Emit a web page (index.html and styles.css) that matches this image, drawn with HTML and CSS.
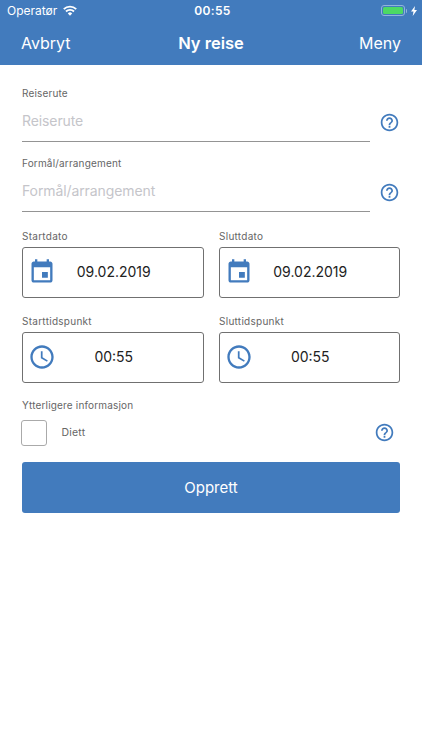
FILE: index.html
```
<!DOCTYPE html>
<html lang="nb">
<head>
<meta charset="utf-8">
<title>Ny reise</title>
<link rel="stylesheet" href="styles.css">
</head>
<body>
<svg class="defs" aria-hidden="true">
  <symbol id="help" viewBox="0 0 24 24"><path d="M11 18h2v-2h-2v2zm1-16C6.480 2 2 6.480 2 12s4.480 10 10 10 10-4.480 10-10S17.520 2 12 2zm0 18c-4.410 0-8-3.590-8-8s3.590-8 8-8 8 3.590 8 8-3.590 8-8 8zm0-14c-2.210 0-4 1.790-4 4h2c0-1.100.9-2 2-2s2 .9 2 2c0 2-3 1.750-3 5h2c0-2.250 3-2.500 3-5 0-2.210-1.790-4-4-4z"/></symbol>
  <symbol id="event" viewBox="0 0 24 24"><path d="M17 12h-5v5h5v-5zM16 1v2H8V1H6v2H5c-1.110 0-1.990.9-1.990 2L3 19c0 1.100.89 2 2 2h14c1.100 0 2-.9 2-2V5c0-1.100-.9-2-2-2h-1V1h-2zm3 18H5V8h14v11z"/></symbol>
  <symbol id="clock" viewBox="0 0 24 24"><path d="M11.990 2C6.470 2 2 6.480 2 12s4.470 10 9.990 10C17.520 22 22 17.520 22 12S17.520 2 11.990 2zM12 20c-4.420 0-8-3.580-8-8s3.580-8 8-8 8 3.580 8 8-3.580 8-8 8zm.5-13H11v6l5.250 3.150.75-1.230-4.500-2.670z"/></symbol>
</svg>
<header class="header">
  <div class="status">
    <div class="carrier"><span>Operatør</span>
      <svg class="wifi" viewBox="0 0 14 11"><g fill="none" stroke="#fff" stroke-width="1.900"><path d="M.8 4.100a8.900 8.900 0 0 1 12.400 0"/><path d="M3 6.500a5.700 5.700 0 0 1 8 0"/></g><path fill="#fff" d="M4.800 8.400a3.200 3.200 0 0 1 4.400 0L7 10.700z"/></svg>
    </div>
    <span class="time">00:55</span>
    <div class="power">
      <span class="battery"><span class="charge"></span></span><span class="cap"></span>
      <svg class="bolt" viewBox="0 0 6 10"><path fill="#fff" d="M4 0 0 5.600h2.500L1.700 10 6 4.100H3.400z"/></svg>
    </div>
  </div>
  <nav class="nav"><span>Avbryt</span><h1 class="title">Ny reise</h1><span class="menu">Meny</span></nav>
</header>
<main class="form">
  <div class="label">Reiserute</div>
  <div class="row"><div class="input">Reiserute</div><svg class="help"><use href="#help"/></svg></div>
  <div class="label second">Formål/arrangement</div>
  <div class="row"><div class="input">Formål/arrangement</div><svg class="help"><use href="#help"/></svg></div>
  <div class="pickers">
    <div><div class="label">Startdato</div><div class="box"><svg class="icon"><use href="#event"/></svg><span class="value">09.02.2019</span></div></div>
    <div><div class="label">Sluttdato</div><div class="box"><svg class="icon"><use href="#event"/></svg><span class="value">09.02.2019</span></div></div>
    <div><div class="label">Starttidspunkt</div><div class="box"><svg class="icon"><use href="#clock"/></svg><span class="value">00:55</span></div></div>
    <div><div class="label">Sluttidspunkt</div><div class="box"><svg class="icon"><use href="#clock"/></svg><span class="value">00:55</span></div></div>
  </div>
  <div class="label extra">Ytterligere informasjon</div>
  <div class="option"><span class="check"></span><span class="diet">Diett</span><svg class="help"><use href="#help"/></svg></div>
  <div class="submit">Opprett</div>
</main>
</body>
</html>
```
FILE: styles.css
```
* { box-sizing: border-box; }
body { margin: 0; background: #fff; font-family: Inter, "Liberation Sans", sans-serif; color: #222; }
.defs { display: none; }
svg { display: block; flex: none; }
.header { height: 65px; background: #427bbd; color: #fff; }
.status { height: 21px; display: grid; grid-template-columns: 1fr auto 1fr; align-items: center; padding: 0 5px 0 7px; font-size: 12px; }
.carrier { display: flex; align-items: center; gap: 6px; letter-spacing: 0; }
.wifi { width: 14px; height: 11px; }
.time { font-weight: 600; letter-spacing: .3px; padding-left: 1px; }
.power { display: flex; align-items: center; justify-content: flex-end; }
.battery { width: 24px; height: 11px; border: 1px solid #91b4da; border-radius: 3px; padding: 1px; }
.charge { display: block; height: 7px; border-radius: 1.500px; background: #4cd964; }
.cap { width: 1.500px; height: 4px; margin: 0 4px 0 1px; border-radius: 0 2px 2px 0; background: #91b4da; }
.bolt { width: 6px; height: 10px; }
.nav { height: 44px; display: grid; grid-template-columns: 1fr auto 1fr; align-items: center; padding: 0 21px; font-size: 16px; line-height: 20px; }
.title { margin: 0; font-size: 16.500px; font-weight: 600; }
.menu { text-align: right; }
.form { padding: 21px 22px 0; }
.label { height: 14px; line-height: 14px; font-size: 10px; letter-spacing: .17px; color: #666; }
.row { display: flex; justify-content: space-between; height: 41.500px; }
.input { width: 348px; height: 41.500px; border-bottom: 1px solid #949494; font-size: 14px; letter-spacing: -.1px; line-height: 42px; color: #c5c5ca; }
.help { width: 21px; height: 21px; margin-top: 12px; fill: #427bbd; }
.row .help { margin-right: .5px; }
.second { margin-top: 14.500px; }
.pickers { display: grid; grid-template-columns: 182px 181px; column-gap: 15px; row-gap: 16px; margin-top: 17px; }
.pickers .label { letter-spacing: .27px; }
.box { display: flex; align-items: center; height: 51px; margin-top: 4px; border: 1px solid #707070; border-radius: 3px; }
.icon { width: 28px; height: 28px; margin-left: 4.500px; fill: #427bbd; }
.value { flex: 1; padding-right: 32px; padding-left: 1px; text-align: center; font-size: 14px; line-height: 18px; margin-top: -1px; }
.extra { margin-top: 15px; }
.option { display: flex; align-items: center; height: 27px; margin-top: 7px; }
.check { width: 26px; height: 26px; border: 1px solid #aaa; border-radius: 3px; margin: 1px 0 0 -1px; }
.diet { margin-left: 14.500px; font-size: 10.500px; color: #666; letter-spacing: .2px; }
.option .help { margin: 0 5px 0 auto; }
.submit { height: 51px; margin-top: 16px; border-radius: 3px; background: #427bbd; color: #fff; text-align: center; font-size: 15px; line-height: 51px; }
```
